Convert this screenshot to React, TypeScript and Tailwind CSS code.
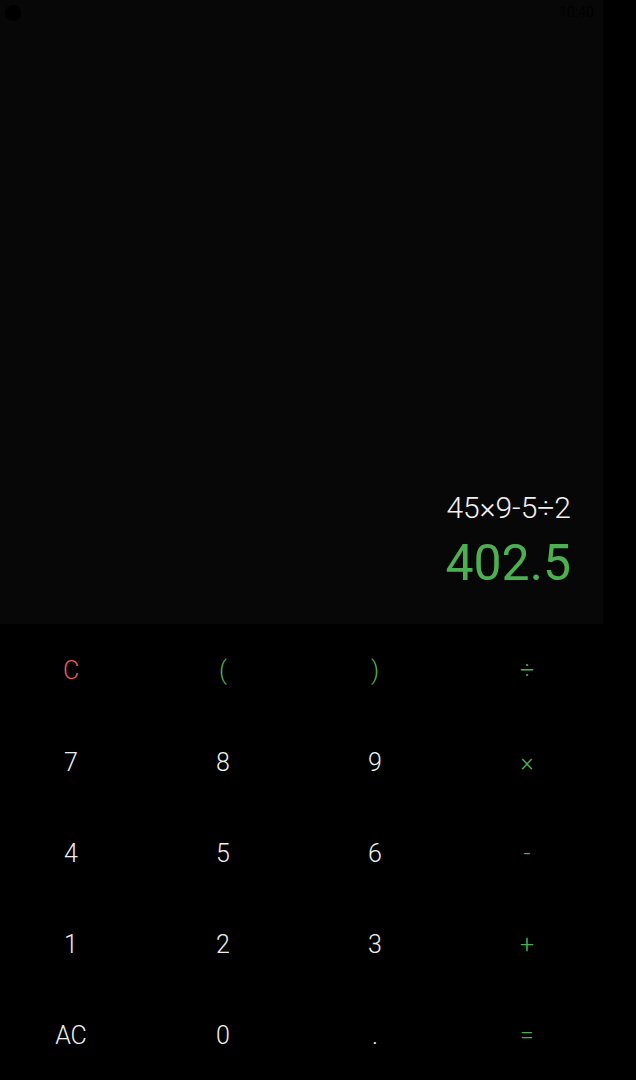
const keys = [
  { k: "C", c: "text-[#e35d5d]" },
  { k: "(", c: "text-[#4caf50]" },
  { k: ")", c: "text-[#4caf50]" },
  { k: "÷", c: "text-[#4caf50]" },
  { k: "7" }, { k: "8" }, { k: "9" },
  { k: "×", c: "text-[#4caf50]" },
  { k: "4" }, { k: "5" }, { k: "6" },
  { k: "-", c: "text-[#4caf50]" },
  { k: "1" }, { k: "2" }, { k: "3" },
  { k: "+", c: "text-[#4caf50]" },
  { k: "AC" }, { k: "0" }, { k: "." },
  { k: "=", c: "text-[#4caf50]" },
];

export default function App() {
  return (
    <div className="w-[636px] h-[1080px] bg-black flex flex-col font-['Roboto',sans-serif]">
      <div className="w-[603px] h-[624px] bg-[#070707] flex flex-col">
        <div className="h-[25px] flex items-center justify-between pl-[5px] pr-[9px]">
          <div className="w-[16px] h-[16px] rounded-full bg-black" />
          <span className="text-[14px] text-[#020202]">10:40</span>
        </div>
        <div className="flex-1 flex flex-col items-end justify-end pr-[32px] pb-[31px]">
          <div className="text-[30px] leading-[36px] font-light text-[#f0f0f0]">45×9-5÷2</div>
          <div className="text-[50px] leading-[60px] text-[#4caf50] mt-[7px]">402.5</div>
        </div>
      </div>
      <div className="flex-1 grid grid-cols-[repeat(4,152px)] grid-rows-5">
        {keys.map((key) => (
          <button
            key={key.k}
            className={`pr-[10px] pt-[3px] flex items-center justify-center text-[25px] font-light ${key.c ?? "text-[#eeeeee]"}`}
          >
            {key.k}
          </button>
        ))}
      </div>
    </div>
  );
}
